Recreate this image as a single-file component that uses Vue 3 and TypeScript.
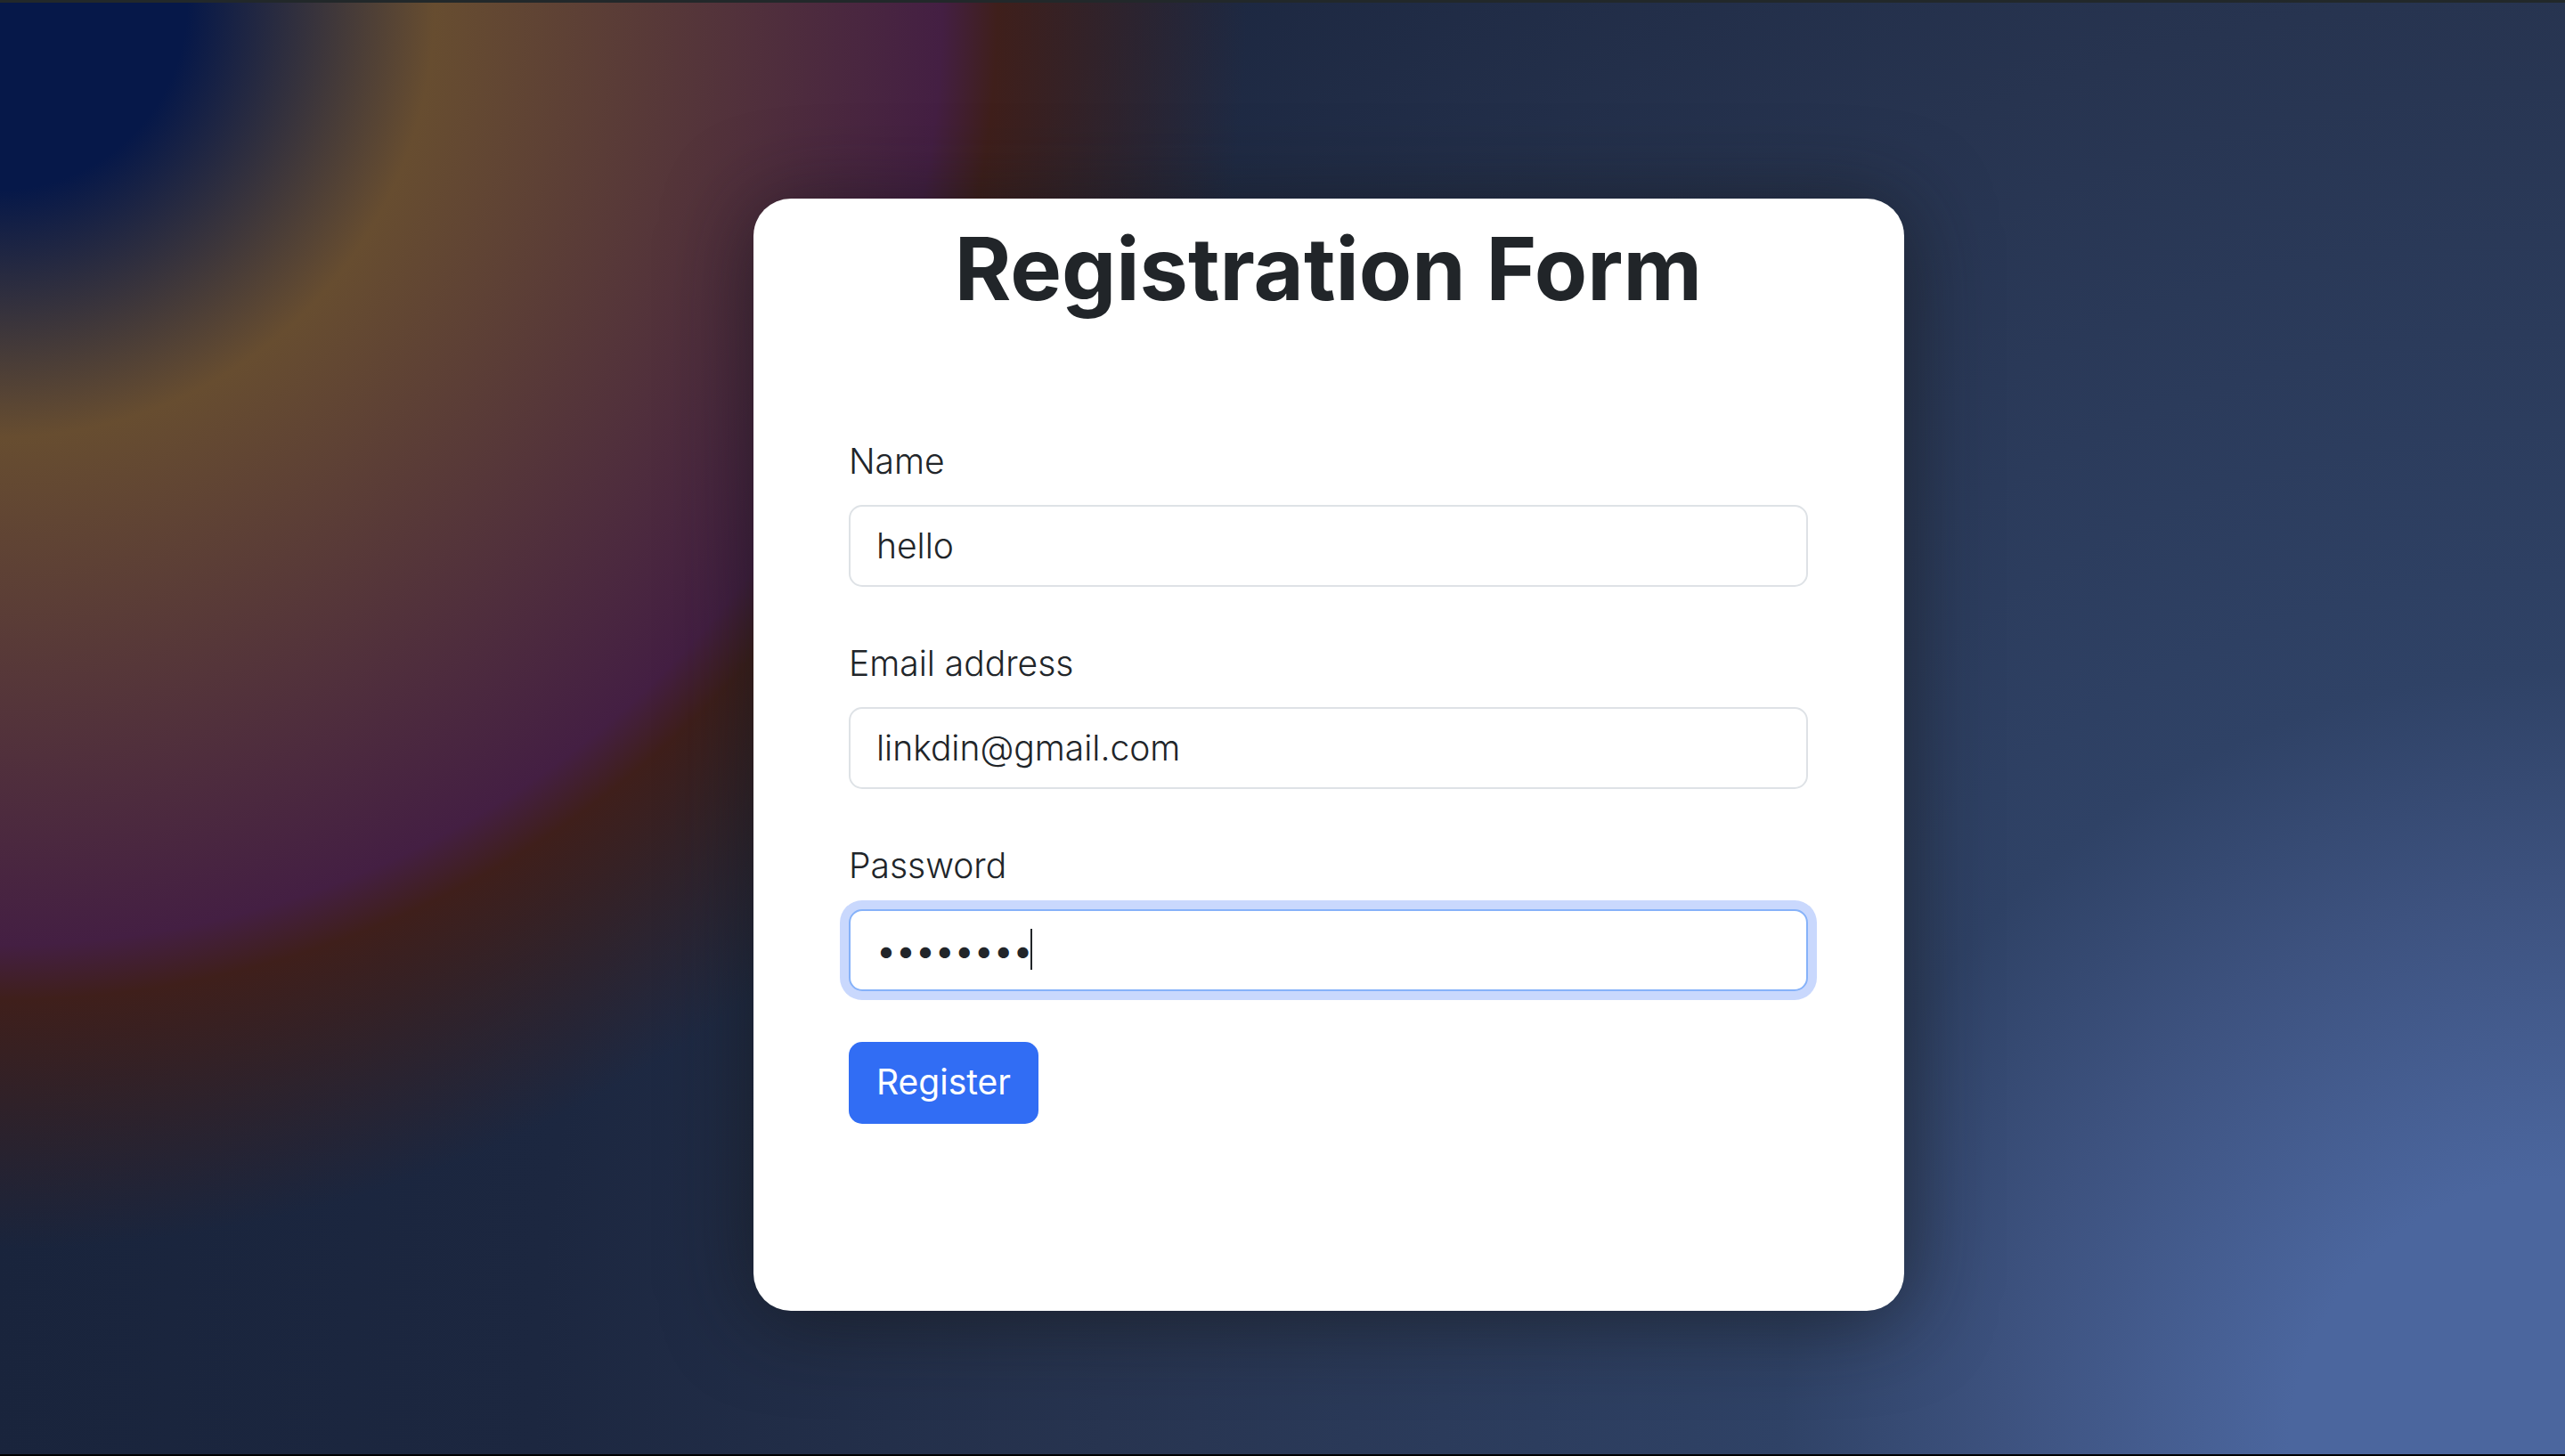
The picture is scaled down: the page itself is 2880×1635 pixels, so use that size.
<script setup lang="ts">
import { onMounted, ref } from 'vue'

const name = ref('hello')
const email = ref('linkdin@gmail.com')
const password = ref('password')
const passwordInput = ref<HTMLInputElement | null>(null)

onMounted(() => passwordInput.value?.focus())
</script>

<template>
  <main class="page">
    <section class="card">
      <h1 class="title">Registration Form</h1>
      <form class="form" @submit.prevent>
        <div class="field">
          <label for="name">Name</label>
          <input id="name" v-model="name" type="text" />
        </div>
        <div class="field">
          <label for="email">Email address</label>
          <input id="email" v-model="email" type="email" />
        </div>
        <div class="field">
          <label for="password">Password</label>
          <div class="control">
            <input id="password" ref="passwordInput" v-model="password" class="active" type="password" />
            <span class="caret" aria-hidden="true"></span>
          </div>
        </div>
        <button type="submit">Register</button>
      </form>
    </section>
  </main>
</template>

<style>
body {
  margin: 0;
}
</style>

<style scoped>
.page {
  box-sizing: border-box;
  min-height: 100vh;
  padding: 220px 0 160px 29.375%;
  border-top: 3px solid #22282a;
  border-bottom: 2px solid #000;
  background:
    radial-gradient(
      circle at 0 0,
      #061849 210px,
      #674d30 488px,
      #441f43 1058px,
      #3f1f1b 1120px,
      rgba(63, 31, 27, 0) 1400px
    ),
    radial-gradient(
      circle at 100% 100%,
      #4b669e 310px,
      #3d527f 630px,
      #2f4266 880px,
      #273450 1640px,
      #1c2740 2280px,
      #19243c 2900px
    );
  color: #212529;
  font-family: Inter, "Liberation Sans", sans-serif;
  font-size: 39px;
  font-weight: 300;
  line-height: 58px;
}

.card {
  box-sizing: border-box;
  width: 63.5%;
  padding: 20px 108px 210px 107px;
  border-radius: 42px;
  background: #fff;
  box-shadow: 0 8px 96px rgba(20, 22, 24, 0.64);
}

.title {
  margin: 0 0 128px;
  font-size: 97px;
  font-weight: 700;
  line-height: 118px;
  text-align: center;
}

.form {
  display: flex;
  flex-direction: column;
  align-items: flex-start;
}

.field {
  display: flex;
  flex-direction: column;
  gap: 20px;
  width: 100%;
  margin-bottom: 57px;
}

.control {
  position: relative;
}

input {
  display: block;
  box-sizing: border-box;
  width: 100%;
  height: 92px;
  padding: 0 29px 2px;
  border: 2px solid #dee2e6;
  border-radius: 15px;
  outline: 0;
  background: #fff;
  color: inherit;
  font: inherit;
}

input.active {
  border-color: #86b2f9;
  box-shadow: 0 0 0 10px #c9d8fd;
  caret-color: transparent;
  font-weight: 400;
}

.caret {
  position: absolute;
  top: 22px;
  left: 204px;
  width: 2px;
  height: 46px;
  background: #212529;
}

button {
  height: 92px;
  padding: 0 31px 2px;
  border: 0;
  border-radius: 15px;
  background: #316df4;
  color: #fff;
  font: inherit;
  font-weight: 400;
}
</style>
